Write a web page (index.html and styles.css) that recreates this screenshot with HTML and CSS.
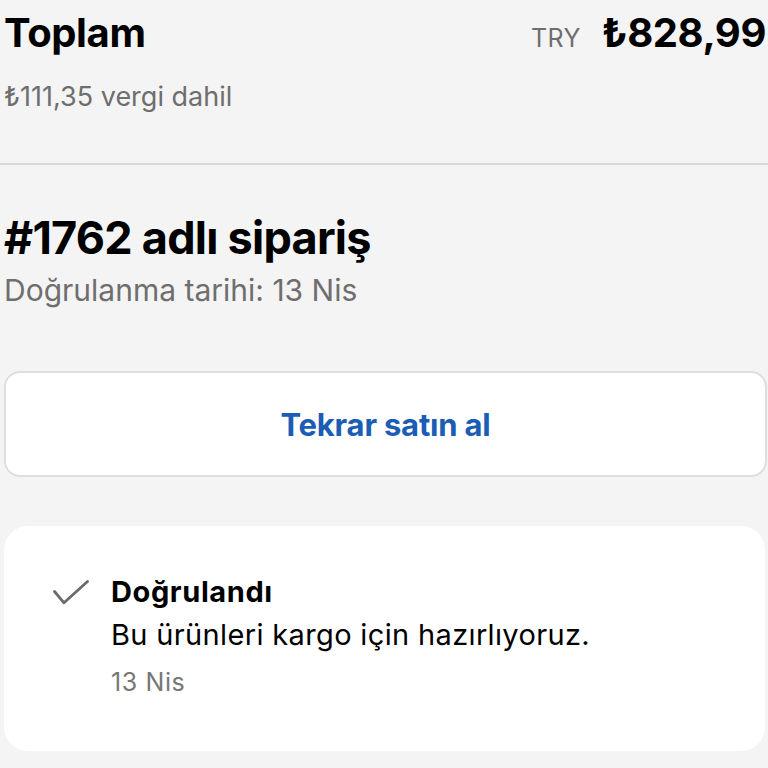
FILE: index.html
```html
<!DOCTYPE html>
<html lang="tr">
<head>
<meta charset="utf-8">
<link rel="stylesheet" href="styles.css">
</head>
<body>
<div class="page">
  <section class="total">
    <div class="total-row">
      <h1 class="total-title">Toplam</h1>
      <div class="total-amount"><span class="currency">TRY</span><span class="price">₺828,99</span></div>
    </div>
    <p class="tax">₺111,35 vergi dahil</p>
  </section>
  <hr class="divider">
  <section class="order">
    <h2 class="order-title">#1762 adlı sipariş</h2>
    <p class="order-date">Doğrulanma tarihi: 13 Nis</p>
  </section>
  <button class="buy-again">Tekrar satın al</button>
  <section class="status-card">
    <div class="status">
      <svg class="check" width="36" height="26" viewBox="0 0 36 26"><path d="M1.5 11.5 L11 22.8 L34.5 1.5" fill="none" stroke="#6b6b6b" stroke-width="2.8" stroke-linecap="round" stroke-linejoin="round"/></svg>
      <div class="status-text">
        <div class="status-title">Doğrulandı</div>
        <div class="status-desc">Bu ürünleri kargo için hazırlıyoruz.</div>
        <div class="status-date">13 Nis</div>
      </div>
    </div>
  </section>
</div>
</body>
</html>
```
FILE: styles.css
```css
* { box-sizing: border-box; }
html, body { margin: 0; padding: 0; }
body {
  background: #f4f4f4;
  font-family: Inter, "Noto Sans", sans-serif;
  color: #000;
  width: 768px;
  height: 768px;
  overflow: hidden;
}
.page {
  padding: 0 2px 0 4px;
}
.total { padding-top: 8px; }
.total-row {
  display: flex;
  justify-content: space-between;
  align-items: baseline;
}
.total-title {
  margin: 0;
  font-size: 40px;
  font-weight: 700;
  line-height: 48px;
  letter-spacing: -0.4px;
}
.total-amount {
  display: flex;
  align-items: baseline;
  gap: 21px;
}
.currency {
  font-size: 25px;
  color: #6e6e6e;
  letter-spacing: 0.4px;
}
.price {
  font-size: 40px;
  font-weight: 700;
  letter-spacing: -0.4px;
}
.tax {
  margin: 24px 0 0;
  font-size: 27px;
  line-height: 32px;
  color: #6e6e6e;
}
.divider {
  border: 0;
  height: 2px;
  background: #d8d8d8;
  margin: 50px -2px 0 -4px;
}
.order { padding-top: 47px; }
.order-title {
  margin: 0;
  font-size: 45px;
  font-weight: 700;
  line-height: 52px;
  letter-spacing: -0.75px;
}
.order-date {
  margin: 7px 0 0;
  font-size: 30px;
  line-height: 38px;
  color: #6e6e6e;
}
.buy-again {
  display: block;
  width: 763px;
  height: 106px;
  margin-top: 62px;
  background: #fff;
  border: 2px solid #dedede;
  border-radius: 16px;
  font-family: inherit;
  font-size: 31px;
  font-weight: 700;
  letter-spacing: -0.2px;
  color: #1b5cb4;
  padding: 0;
}
.status-card {
  margin-top: 49px;
  width: 761px;
  height: 225px;
  background: #fff;
  border-radius: 24px;
  padding: 46px 0 0 49px;
}
.status {
  display: flex;
  gap: 22px;
}
.check { margin-top: 8px; flex: none; }
.status-title {
  font-size: 29px;
  font-weight: 700;
  line-height: 40px;
  letter-spacing: 0.6px;
}
.status-desc {
  margin-top: 3px;
  font-size: 29px;
  line-height: 40px;
  letter-spacing: 0.35px;
}
.status-date {
  margin-top: 7px;
  font-size: 25px;
  line-height: 40px;
  letter-spacing: 0.6px;
  color: #777;
}
```
